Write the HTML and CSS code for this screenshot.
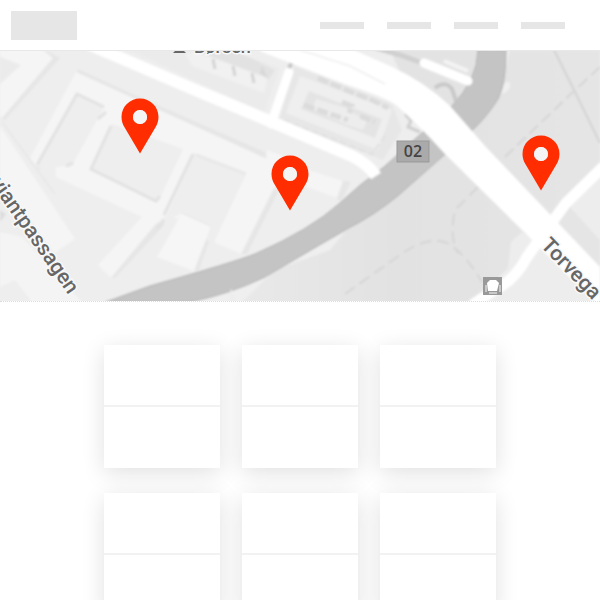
FILE: index.html
```html
<!DOCTYPE html>
<html lang="en">
<head>
    <meta charset="UTF-8" />
    <meta name="viewport" content="width=device-width, initial-scale=1" />
    <title>Map layout</title>
    <link rel="stylesheet" href="styles.css">
</head>
<body>
    <header class="header">
        <a href="#" class="logo" aria-label="Home"></a>
        <nav class="nav">
            <a href="#" class="nav-link" aria-label="Link 1"></a>
            <a href="#" class="nav-link" aria-label="Link 2"></a>
            <a href="#" class="nav-link" aria-label="Link 3"></a>
            <a href="#" class="nav-link" aria-label="Link 4"></a>
        </nav>
    </header>

    <section class="map">
        <svg class="map-canvas" viewBox="0 51 600 250" preserveAspectRatio="xMidYMid slice">
            <defs>
                <filter id="soft" x="-5%" y="-5%" width="110%" height="110%">
                    <feGaussianBlur stdDeviation="0.8" />
                </filter>
                <linearGradient id="water" x1="0" y1="0" x2="1" y2="0">
                    <stop offset="0" stop-color="#ebebeb" />
                    <stop offset="0.5" stop-color="#e2e2e2" />
                    <stop offset="1" stop-color="#e5e5e5" />
                </linearGradient>
                <symbol id="pin" viewBox="0 0 38 56">
                    <path fill="#ff2d00" fill-rule="evenodd" d="M19 0.5C8.700 0.5 0.500 8.700 0.500 19c0 4 1.200 7.200 3 10.200L19 55.500l15.500-26.300c1.800-3 3-6.200 3-10.200C37.500 8.700 29.300 0.500 19 0.500zM19 12a7 7 0 1 1 0 14a7 7 0 0 1 0-14z" />
                </symbol>
            </defs>

            <rect y="50" width="600" height="252" fill="#eeeeee" />

            <g filter="url(#soft)">
                <!-- building shadows -->
                <g fill="#e6e6e6">
                    <path d="M45 50L60 58L5 120L0 118z" />
                    <path d="M78 69L130 93L265 152L266 160L76 74z" />
                    <path d="M37 167L41 164L39 170z" />
                    <path d="M271 188L279 190L247 254L240 254z" />
                    <path d="M155 222L165 224L115 278L110 278z" />
                    <path d="M211 226L214 228L199 270L194 271z" />
                    <path d="M340 180L351 182L341 202L336 198z" />
                </g>

                <!-- buildings on the left bank -->
                <g fill="#f5f5f5">
                    <path d="M0 50L43 50L53 58L2 118L0 117z" />
                    <path d="M0 126L75 239L54 253L0 180z" />
                    <path d="M76 72L267 159L267 150L290 159L273 190L241 254L216 243L196 222L165 216L155 225L111 278L98 265L142 217L56 177L56 167L37 167L30 158z" />
                    <path d="M302 168L343 181L337 198L304 186z" />
                    <path d="M0 232L22 237L82 302L0 302z" fill="#f4f4f4" />
                </g>
                <path d="M0 57L21 65L0 84z" fill="#ebebeb" />
                <g fill="#eeeeee">
                    <path d="M77 93L104 107L98 118L72 165L56 167L37 167z" />
                    <path d="M112 124L183 149L158 202L90 170z" />
                    <path d="M195 153L246 174L214 242L205 240L182 213L164 222z" />
                    <path d="M0 287L15 280L32 302L0 302z" />
                </g>
                <path d="M37 165L77 94L104 107M106 112L98 119M111 126L91 169L156 201L160 196M193 154L164 215M164 220L157 229M66 166L73 163" fill="none" stroke="#e2e2e2" stroke-width="3" />
                <path d="M196 155L246 174" fill="none" stroke="#e8e8e8" stroke-width="3" />
                <path d="M182 213L211 226L194 271L157 257z" fill="#f6f6f6" />
                <path d="M182 213L211 226" stroke="#e4e4e4" stroke-width="1" />
                <path d="M2 122L55 194" fill="none" stroke="#e8e8e8" stroke-width="2" />
                <path d="M0 210L6 214L0 222z" fill="#dddddd" />

                <!-- exchange hall and the block next to it -->
                <path d="M130 50L230 50L280 68L264 113z" fill="#ebebeb" />
                <path d="M202 52L238 52L275 70L265 85L205 60z" fill="#e2e2e2" />
                <path d="M185 53L198 52L268 78L264 93L192 66z" fill="#f1f1f1" />
                <path d="M213 59l2 10M233 66l2 10M252 73l2 10" stroke="#d4d4d4" stroke-width="3" />
                <path d="M262 66l6 13l-8-6z" fill="#d8d8d8" />
                <path d="M294 66L392 104L402 130L383 160L279 120z" fill="#e7e7e7" />
                <path d="M300 76L392 110L378 150L286 113z" fill="#efefef" />
                <path d="M309 91L382 119L375 138L301 109z" fill="#e4e4e4" />
                <path d="M316 99L346 108L354 114L368 119L363 130L345 124L312 109z" fill="#ededed" />
                <path d="M304 105L348 120M342 102L352 106L349 113M360 116L375 122M318 78L351 92L372 100L388 108" fill="none" stroke="#dbdbdb" stroke-width="5" stroke-dasharray="11 3" />
                <path d="M284 120L372 154L385 136" fill="none" stroke="#e0e0e0" stroke-width="2" stroke-dasharray="7 3" />

                <!-- water and right bank -->
                <path d="M510 50L600 50L600 302L190 302L265 277L345 230L400 194L474 129L500 95z" fill="url(#water)" />
                <path d="M190 302L265 275L345 232L330 250L275 270L242 302z" fill="#efefef" />
                <path d="M600 165L568 205L600 240zM522 232L547 249L600 302L474 302L508 268L511 242z" fill="#ededed" />
                <path d="M505 83q6-4 5 4q-3 6-9 7L475 130L500 92z" fill="#f0f0f0" />
                <path d="M390 50L480 50L466 91L452 107L400 72z" fill="#e3e3e3" />
                <path d="M554 50L575 92L600 143" fill="none" stroke="#d4d4d4" stroke-width="2" />
                <path d="M600 67L574 91L505 157" fill="none" stroke="#d6d6d6" stroke-width="2" stroke-dasharray="12 5" />
                <path d="M478 187L455 210Q449 238 458 253M345 294L400 255Q428 235 447 243Q465 253 482 282" fill="none" stroke="#d6d6d6" stroke-width="2" stroke-dasharray="12 6" />

                <!-- ring road -->
                <path d="M106 302L150 286Q235 262 255 254Q310 230 340 203Q360 184 384 167L452 106Q477 80 478 50L506 50Q506 84 498 99Q484 121 468 134L400 194Q375 215 345 230L265 277Q230 294 190 302z" fill="#c4c4c4" stroke="#b0b0b0" stroke-width="1" />
                <path d="M229 302L231 288L236 302" fill="#ededed" />

                <!-- streets -->
                <path d="M88 44L200 92L272 122L352 156Q368 164 376 176" fill="none" stroke="#ffffff" stroke-width="12" />
                <path d="M271 124L289 72" fill="none" stroke="#ffffff" stroke-width="9" stroke-linecap="round" />
                <path d="M289 68L293 60" stroke="#c8c8c8" stroke-width="4" />
                <path d="M604 166L566 203L550 225L527 257Q515 280 496 289L472 305" fill="none" stroke="#ffffff" stroke-width="11" />
                <path d="M370 46L400 55L425 64" fill="none" stroke="#d0d0d0" stroke-width="5" />
                <path d="M424 63L468 81" fill="none" stroke="#ffffff" stroke-width="9" stroke-linecap="round" />
                <path d="M444 61L468 71" stroke="#f4f4f4" stroke-width="4" />
                <path d="M435 88Q445 80 452 89L456 101" fill="none" stroke="#c9c9c9" stroke-width="4" />
                <path d="M405 114L411 121L408 127L420 132" fill="none" stroke="#d0d0d0" stroke-width="3" />
                <path d="M254 46L345 46L390 66Q425 82 450 106L485 146L600 267L600 307L445 154Q420 126 396 105Q385 97 345 84L262 52z" fill="#ffffff" />
                <path d="M300 50L350 66L385 84" fill="none" stroke="#f3f3f3" stroke-width="2" />
            </g>

            <!-- road sign and station -->
            <rect x="397" y="141" width="32" height="21" fill="#aaaaaa" stroke="#999999" />
            <text class="sign-text" x="413" y="157" text-anchor="middle">02</text>
            <rect x="483" y="277" width="19" height="18" fill="#999999" />
            <path d="M487 283L490 280L496 280L499 283L497 291L488 291z" fill="#ffffff" />
            <path d="M486 285v7M500 285v7M489 293h8" stroke="#c9c9c9" stroke-width="2" />
            <path d="M173 53l4-4h5l4 4z" fill="#666666" />

            <!-- street names -->
            <text class="street-text" x="194" y="53">Børsen</text>
            <text class="street-text street-large" transform="translate(-10 183) rotate(55)">viantpassagen</text>
            <text class="street-text street-large" transform="translate(540 246) rotate(46)">Torvega</text>

            <use href="#pin" x="121" y="98" width="38" height="56" />
            <use href="#pin" x="271" y="155" width="38" height="56" />
            <use href="#pin" x="522" y="135" width="38" height="56" />
            <g fill="#f5f5f5">
                <circle cx="140" cy="117" r="7" />
                <circle cx="290" cy="174" r="7" />
                <circle cx="541" cy="154" r="7" />
            </g>
        </svg>
    </section>

    <main class="cards">
        <div class="card"><div class="card-top"></div><div class="card-bottom"></div></div>
        <div class="card"><div class="card-top"></div><div class="card-bottom"></div></div>
        <div class="card"><div class="card-top"></div><div class="card-bottom"></div></div>
        <div class="card"><div class="card-top"></div><div class="card-bottom"></div></div>
        <div class="card"><div class="card-top"></div><div class="card-bottom"></div></div>
        <div class="card"><div class="card-top"></div><div class="card-bottom"></div></div>
    </main>
</body>
</html>
```

FILE: styles.css
```css
* {
    margin: 0; padding: 0; box-sizing: border-box;
}
body {
    background: #fff;
    font-family: 'Open Sans', 'Noto Sans', sans-serif;
}

/* header */
.header {
    display: flex;
    justify-content: space-between;
    align-items: center;
    padding: 11px 35px 10px 11px;
    background: #fff;
}
.logo {
    width: 66px;
    height: 29px;
    background: #e6e6e6;
}
.nav {
    display: flex;
    gap: 23px;
}
.nav-link {
    width: 44px;
    height: 7px;
    background: #e6e6e6;
}

/* map */
.map {
    border-top: 1px solid #e8e8e8;
    border-bottom: 1px dotted #ddd;
}
.map-canvas {
    display: block;
    width: 100%;
    height: 250px;
}
.sign-text {
    font-size: 16px;
    font-weight: 600;
    fill: #444;
}
.street-text {
    font-family: Roboto, 'Open Sans', sans-serif;
    font-size: 18px;
    font-weight: 500;
    fill: #666;
    stroke: #f8f8f8;
    stroke-width: 3px;
    paint-order: stroke;
}
.street-large {
    font-size: 21px;
}

/* cards */
.cards {
    display: grid;
    grid-template-columns: repeat(3, 1fr);
    gap: 25px 22px;
    max-width: 392px;
    margin: 0 auto;
    padding: 43px 0;
}
.card {
    position: relative;
    box-shadow: 0 5px 22px rgba(0,0,0,0.12);
}
.card-top, .card-bottom {
    position: relative;
    z-index: 1;
    background: #fff;
}
.card-top {
    height: 62px;
    border-bottom: 2px solid #f2f2f2;
}
.card-bottom {
    height: 61px;
}
```
